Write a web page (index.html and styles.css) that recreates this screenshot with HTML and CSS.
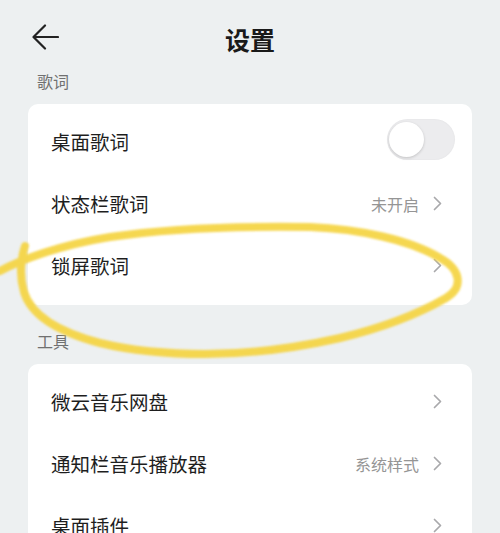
FILE: index.html
```html
<!DOCTYPE html>
<html lang="zh-CN">
<head>
<meta charset="utf-8">
<title>设置</title>
<link rel="stylesheet" href="styles.css">
</head>
<body>
<div class="page">
  <header class="header">
    <svg class="back" width="28" height="28" viewBox="0 0 28 28" aria-hidden="true">
      <path d="M27 13H3M14 1.5L2.5 13L14 24.5" fill="none" stroke="#222" stroke-width="2.2" stroke-linecap="round" stroke-linejoin="round"/>
    </svg>
    <h1 class="title">设置</h1>
    <span></span>
  </header>

  <div class="section-label">歌词</div>
  <div class="card">
    <div class="row">
      <span class="row-title">桌面歌词</span>
      <span class="toggle"><span class="knob"></span></span>
    </div>
    <div class="row">
      <span class="row-title">状态栏歌词</span>
      <span class="row-right"><span class="value">未开启</span><svg class="chev" width="9" height="15" viewBox="0 0 9 15"><path d="M1.5 1.5L7.5 7.5L1.5 13.5" fill="none" stroke="#a9a9ab" stroke-width="1.7" stroke-linecap="round" stroke-linejoin="round"/></svg></span>
    </div>
    <div class="row">
      <span class="row-title">锁屏歌词</span>
      <span class="row-right"><svg class="chev" width="9" height="15" viewBox="0 0 9 15"><path d="M1.5 1.5L7.5 7.5L1.5 13.5" fill="none" stroke="#a9a9ab" stroke-width="1.7" stroke-linecap="round" stroke-linejoin="round"/></svg></span>
    </div>
  </div>

  <div class="section-label second">工具</div>
  <div class="card">
    <div class="row">
      <span class="row-title">微云音乐网盘</span>
      <span class="row-right"><svg class="chev" width="9" height="15" viewBox="0 0 9 15"><path d="M1.5 1.5L7.5 7.5L1.5 13.5" fill="none" stroke="#a9a9ab" stroke-width="1.7" stroke-linecap="round" stroke-linejoin="round"/></svg></span>
    </div>
    <div class="row">
      <span class="row-title">通知栏音乐播放器</span>
      <span class="row-right"><span class="value">系统样式</span><svg class="chev" width="9" height="15" viewBox="0 0 9 15"><path d="M1.5 1.5L7.5 7.5L1.5 13.5" fill="none" stroke="#a9a9ab" stroke-width="1.7" stroke-linecap="round" stroke-linejoin="round"/></svg></span>
    </div>
    <div class="row">
      <span class="row-title">桌面插件</span>
      <span class="row-right"><svg class="chev" width="9" height="15" viewBox="0 0 9 15"><path d="M1.5 1.5L7.5 7.5L1.5 13.5" fill="none" stroke="#a9a9ab" stroke-width="1.7" stroke-linecap="round" stroke-linejoin="round"/></svg></span>
    </div>
  </div>

  <svg class="scribble" width="500" height="533" viewBox="0 0 500 533" aria-hidden="true">
    <defs>
      <filter id="soft" x="-5%" y="-5%" width="110%" height="110%">
        <feGaussianBlur stdDeviation="0.9"/>
      </filter>
    </defs>
    <path d="M0 271 C 20 260, 60 245, 110 237 C 170 228, 240 226, 310 227 C 360 229, 410 240, 440 258 C 462 270, 463 288, 446 298 C 420 313, 390 326, 340 338 C 300 347, 250 354, 205 354 C 160 354, 125 349, 100 343 C 62 333, 32 318, 24 292 C 19 274, 21 258, 25 246" fill="none" stroke="#f5d443" stroke-width="8" stroke-linecap="round" stroke-linejoin="round" opacity="0.92" filter="url(#soft)"/>
  </svg>
</div>
</body>
</html>
```

FILE: styles.css
```css
* { box-sizing: border-box; }

html, body {
  margin: 0;
  padding: 0;
  background: #edf0f1;
}

body {
  font-family: "Noto Sans CJK SC", "Noto Sans", sans-serif;
  color: #222;
}

.page {
  position: relative;
  width: 500px;
  height: 533px;
  overflow: hidden;
  padding: 0 28px;
}

.header {
  display: grid;
  grid-template-columns: 1fr auto 1fr;
  align-items: center;
  height: 50px;
  margin-top: 14px;
  margin-bottom: 2px;
}

.back {
  margin-left: 3px;
  margin-bottom: 2px;
  display: block;
}

.title {
  margin: 0;
  font-size: 25px;
  font-weight: 700;
  color: #1a1a1a;
  line-height: 50px;
}

.section-label {
  height: 32px;
  line-height: 30px;
  padding-left: 9px;
  font-size: 16px;
  color: #707070;
}

.section-label.second {
  margin-top: 21px;
}

.card {
  margin-top: 6px;
  background: #fff;
  border-radius: 10px;
  padding: 8px 0 7px;
}

.row {
  display: flex;
  align-items: center;
  justify-content: space-between;
  height: 62px;
  padding: 0 17px 3px 23px;
}

.row-title {
  font-size: 19.5px;
  color: #1e1e1e;
}

.row-right {
  display: flex;
  align-items: center;
}

.value {
  font-size: 16px;
  color: #959595;
  margin-right: 14px;
}

.chev {
  display: block;
  margin-right: 13px;
}

.toggle {
  position: relative;
  width: 68px;
  height: 41px;
  margin-bottom: 4px;
  border-radius: 21px;
  background: #ececee;
  box-shadow: inset 0 0 2px rgba(0,0,0,0.05);
}

.knob {
  position: absolute;
  left: 2px;
  top: 3px;
  width: 35px;
  height: 35px;
  border-radius: 50%;
  background: #fff;
  box-shadow: 0 1px 3px rgba(0,0,0,0.18);
}

.scribble {
  position: absolute;
  left: 0;
  top: 0;
  pointer-events: none;
}
```
